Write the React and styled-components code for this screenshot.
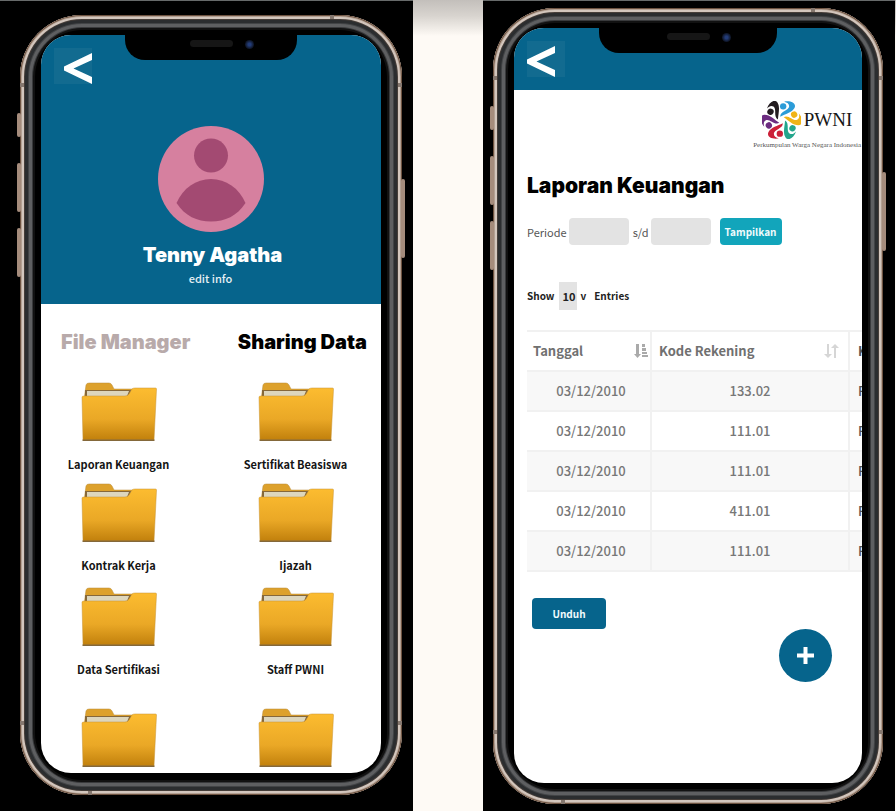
import React from "react";
import styled, { createGlobalStyle } from "styled-components";

const BLUE = "#06648c";
const HEADING = `"Inter", "Open Sans", sans-serif`;
const BODY = `"Noto Sans CJK SC", "Open Sans", sans-serif`;

const GlobalStyle = createGlobalStyle`
  * { box-sizing: border-box; }
  body { margin: 0; background: #fefaf5; }
  button, input, select { font: inherit; border: 0; margin: 0; padding: 0; }
  button { cursor: pointer; }
  h1, h2, p { margin: 0; }
`;

const Page = styled.main`
  display: grid;
  grid-template-columns: 413fr 412fr;
  column-gap: 70px;
  padding-right: 1px;
  min-height: 100vh;
  font-family: ${BODY};
  background: linear-gradient(#c3bfbb, #d8d4cf 16px, #fefaf5 36px);
`;

const Stage = styled.section`
  display: flex;
  flex-direction: column;
  min-width: 0;
  padding: ${(p) => p.$pad};
  background: #000;
  box-shadow: inset 0 1px #676a6a;
`;

const Phone = styled.div`
  position: relative;
  flex: 1;
  display: flex;
  flex-direction: column;
  padding: ${(p) => p.$pad};
  border-radius: 62px;
  background: #000;
  box-shadow:
    inset 0 0 0 1px #6d5240,
    inset 0 0 0 2px #b3a092,
    inset 0 0 0 4px #d3c6bd,
    inset 0 0 0 5px #463e39,
    inset 0 0 0 8px #2b2d2f,
    inset 0 0 0 9px #424446,
    inset 0 0 0 12px #5e5f61,
    inset 0 0 0 13px #393a3c,
    inset 0 0 0 15px #111;
`;

const SideKey = styled.span`
  position: absolute;
  top: ${(p) => p.$top}px;
  ${(p) => p.$side}: -3px;
  width: 4px;
  height: ${(p) => p.$height}px;
  border-radius: 2px;
  background: #a58c7c;
`;

const Antenna = styled.span`
  position: absolute;
  ${(p) => p.$edge}: 0;
  ${(p) => p.$from}: ${(p) => p.$at}px;
  width: 4px;
  height: 4px;
  background: #86786f;
`;

const Screen = styled.div`
  position: relative;
  flex: 1;
  display: flex;
  flex-direction: column;
  overflow: hidden;
  border-radius: 30px;
  background: #fff;
`;

const Notch = styled.div`
  position: absolute;
  top: 0;
  left: 50%;
  width: ${(p) => p.$width}px;
  margin-left: -${(p) => p.$width / 2}px;
  height: 25px;
  border-radius: 0 0 20px 20px;
  background: #000;
  display: flex;
  justify-content: center;
  gap: 12px;
  padding: 5px 0 0 22px;
`;

const Speaker = styled.span`
  width: 43px;
  height: 7px;
  border-radius: 4px;
  background: #161616;
`;

const Camera = styled.span`
  width: 9px;
  height: 9px;
  border-radius: 50%;
  background: radial-gradient(#233c78 20%, #111a30 60%, #080a10);
`;

const Header = styled.header`
  height: ${(p) => p.$height}px;
  padding: ${(p) => p.$pad};
  background: ${BLUE};
  color: #fff;
`;

const BackButton = styled.button`
  display: flex;
  align-items: flex-end;
  justify-content: ${(p) => p.$align};
  width: 38px;
  height: 36px;
  background: #126b90;
  color: #fff;
`;

const Profile = styled.div`
  display: flex;
  flex-direction: column;
  align-items: center;
  margin-top: 42px;
`;

const Name = styled.h1`
  margin-top: 9px;
  padding-left: 4px;
  font: 900 20px/28px ${HEADING};
`;

const EditLink = styled.a`
  margin-top: 1px;
  font-size: 11px;
  line-height: 16px;
  font-weight: 500;
  color: #e6f0f4;
  text-decoration: none;
`;

const Tabs = styled.nav`
  display: flex;
  justify-content: space-between;
  padding: 23px 14px 0 20px;
`;

const Tab = styled.button`
  font: 900 20px/30px ${HEADING};
  background: none;
  color: ${(p) => (p.$active ? "#000" : "#b8aaaa")};
`;

const Folders = styled.div`
  display: grid;
  grid-template-columns: 1fr 1fr;
  grid-template-rows: 101px 104px 121px 64px;
  column-gap: 22px;
  padding: 25px 8px 0 0;
`;

const FolderTile = styled.a`
  display: flex;
  flex-direction: column;
  align-items: center;
  gap: 12px;
  color: #151515;
  font-weight: 700;
  font-size: 11px;
  line-height: 20px;
  text-decoration: none;
`;

const Report = styled.div`
  display: flex;
  flex-direction: column;
  align-items: flex-start;
  flex: 1;
  padding: 11px 0 0 13px;
`;

const Brand = styled.div`
  align-self: flex-end;
  display: flex;
  flex-direction: column;
  align-items: center;
  padding-right: 1px;
  font-family: "Liberation Serif", serif;
  color: #161616;
`;

const BrandRow = styled.div`
  display: flex;
  align-items: center;
  gap: 3px;
  font-size: 19px;
  line-height: 38px;
`;

const BrandNote = styled.p`
  margin-top: 1px;
  font-size: 7px;
  line-height: 10px;
  color: #555;
`;

const Title = styled.h1`
  margin-top: 21px;
  font: 900 21px/30px ${HEADING};
  color: #000;
`;

const Filter = styled.form`
  display: flex;
  align-items: center;
  margin-top: 17px;
  font-size: 11px;
  line-height: 26px;
  color: #555;
`;

const DateField = styled.input`
  width: 60px;
  height: 27px;
  margin: 0 4px 0 2px;
  border-radius: 4px;
  background: #e3e3e3;
`;

const ActionButton = styled.button`
  width: ${(p) => p.$width}px;
  height: ${(p) => p.$height}px;
  margin: ${(p) => p.$margin};
  border-radius: 4px;
  background: ${(p) => p.$color};
  color: #f0fafc;
  font-size: 10px;
  font-weight: 700;
  line-height: 16px;
`;

const Entries = styled.div`
  display: flex;
  align-items: center;
  gap: 5px;
  margin-top: 37px;
  font-size: 10px;
  line-height: 28px;
  font-weight: 700;
  color: #222;
`;

const CountSelect = styled.select`
  appearance: none;
  width: 18px;
  height: 28px;
  padding-left: 3px;
  border-radius: 0;
  background: #e3e3e3;
  color: #222;
  font-size: 11px;
`;

const Caret = styled.span`
  margin: 0 3px 0 -2px;
`;

const TableClip = styled.div`
  align-self: stretch;
  margin-top: 20px;
  overflow: hidden;
`;

const Table = styled.table`
  table-layout: fixed;
  width: 422px;
  border-collapse: collapse;
  font-size: 13px;
  line-height: 20px;
  color: #777;

  th, td {
    border: 2px solid #f1f1f1;
    border-left: 0;
    height: 40px;
  }
  th {
    text-align: left;
    padding: 0 2px 0 6px;
    color: #707070;
  }
  td {
    text-align: center;
    font-weight: 500;
  }
  td:first-child { padding-left: 6px; }
  th:nth-child(2) { padding-right: 9px; padding-left: 7px; }
  th:last-child, td:last-child { text-align: left; padding-left: 8px; color: #555; }
  tbody tr:nth-child(odd) { background: #f8f8f8; }
`;

const HeadCell = styled.div`
  display: flex;
  align-items: center;
  justify-content: space-between;
`;

const AddButton = styled.button`
  align-self: flex-end;
  display: grid;
  place-items: center;
  width: 53px;
  height: 53px;
  margin-right: 30px;
  border-radius: 50%;
  background: ${BLUE};
  color: #fff;
`;

function BackIcon() {
  return (
    <svg width="28" height="31" viewBox="0 0 28 31" fill="currentColor" aria-hidden="true">
      <path d="M28 0V7L9.500 15.500L28 24V31L0 17.500V13.500Z" />
    </svg>
  );
}

function Avatar() {
  return (
    <svg width="106" height="106" viewBox="0 0 106 106" role="img" aria-label="Tenny Agatha">
      <circle cx="53" cy="53" r="53" fill="#d6809f" />
      <circle cx="53" cy="29.500" r="17" fill="#a34a72" />
      <path d="M18.500 77C25 62 38 53 53 53S81 62 87.500 77C79 90 67 95.500 53 95.500S27 90 18.500 77Z" fill="#a34a72" />
    </svg>
  );
}

function FolderIcon({ id }) {
  return (
    <svg width="76" height="60" viewBox="0 0 76 60" aria-hidden="true">
      <defs>
        <linearGradient id={id} x1="0" y1="0" x2="0" y2="1">
          <stop offset="0" stopColor="#fcbc30" />
          <stop offset="0.600" stopColor="#eaa826" />
          <stop offset="1" stopColor="#c1800c" />
        </linearGradient>
      </defs>
      <path d="M3 18L5 3Q5.500 1 8 1H28Q30 1 31 3L33 7H52V18Z" fill="#dda12c" stroke="#b98a35" strokeWidth="0.500" />
      <path d="M4 8H50V16H4Z" fill="#86683a" />
      <path d="M6 9H48L46 14H6Z" fill="#ddd6bd" />
      <path d="M1 15Q1 14 3 14H44Q47 14 48 12L51 7Q52 6 54 6H74.500Q75.500 6 75.500 7L73 58H2Z" fill={`url(#${id})`} stroke="#c69235" strokeWidth="0.500" />
      <path d="M1.500 57.500H73.500V59H1.500Z" fill="#84683a" />
    </svg>
  );
}

const EMBLEM_COLORS = ["#2c9cd8", "#f0b418", "#24a68c", "#cc2038", "#6c2c80", "#231c20"];

function Emblem() {
  return (
    <svg width="39" height="38" viewBox="-58 -57 116 114" aria-hidden="true">
      {EMBLEM_COLORS.map((color, i) => (
        <g key={color} fill={color} transform={`rotate(${i * 60})`}>
          <circle cx="5" cy="-41" r="9.500" />
          <path d="M8 -55C28 -59 46 -50 39 -36C31 -22 12 -18 -4 -10C-4 -27 22 -28 23 -41C23 -49 17 -53 8 -55Z" />
        </g>
      ))}
    </svg>
  );
}

function SortAscIcon() {
  return (
    <svg width="15" height="16" viewBox="0 0 15 16" fill="#aaa" aria-hidden="true">
      <path d="M3 1H6V11H8L4.500 15L1 11H3ZM9 1H12V4H9ZM9 5H13V8H9ZM9 9H14V11H9ZM9 12H15V14H9Z" />
    </svg>
  );
}

function SortIcon() {
  return (
    <svg width="15" height="16" viewBox="0 0 15 16" fill="#d6d6d6" aria-hidden="true">
      <path d="M3 1H5V11H8L4 15L0 11H3ZM10 15H12V5H15L11 1L7 5H10Z" />
    </svg>
  );
}

function Hardware({ keys, antennas }) {
  return (
    <>
      {keys.map(([side, top, height]) => (
        <SideKey key={side + top} $side={side} $top={top} $height={height} />
      ))}
      {antennas.map(([edge, from, at]) => (
        <Antenna key={edge + at} $edge={edge} $from={from} $at={at} />
      ))}
    </>
  );
}

function PhoneNotch({ width }) {
  return (
    <Notch $width={width}>
      <Speaker />
      <Camera />
    </Notch>
  );
}

const FOLDERS = [
  "Laporan Keuangan",
  "Sertifikat Beasiswa",
  "Kontrak Kerja",
  "Ijazah",
  "Data Sertifikasi",
  "Staff PWNI",
  "",
  "",
];

const ROWS = ["133.02", "111.01", "111.01", "411.01", "111.01"];

const KEYS = [
  ["left", 98, 24],
  ["left", 148, 49],
  ["left", 213, 49],
  ["right", 164, 79],
];

const ANTENNAS = [
  ["top", "right", 68],
  ["bottom", "left", 68],
  ["left", "top", 68],
  ["right", "top", 68],
  ["left", "bottom", 70],
  ["right", "bottom", 70],
];

function FilesPhone() {
  return (
    <Stage $pad="15px 11px 16px 20px">
      <Phone $pad="20px 21px 22px 21px">
        <Hardware keys={KEYS} antennas={ANTENNAS} />
        <Screen>
          <Header $height={269} $pad="13px 14px 0 13px">
            <BackButton type="button" aria-label="Back" $align="flex-end">
              <BackIcon />
            </BackButton>
            <Profile>
              <Avatar />
              <Name>Tenny Agatha</Name>
              <EditLink href="#edit">edit info</EditLink>
            </Profile>
          </Header>
          <PhoneNotch width={172} />
          <Tabs>
            <Tab type="button">File Manager</Tab>
            <Tab type="button" $active>Sharing Data</Tab>
          </Tabs>
          <Folders>
            {FOLDERS.map((label, i) => (
              <FolderTile key={i} href="#folder" aria-label={label || "Folder"}>
                <FolderIcon id={`folder-${i}`} />
                {label}
              </FolderTile>
            ))}
          </Folders>
        </Screen>
      </Phone>
    </Stage>
  );
}

function ReportPhone() {
  return (
    <Stage $pad="8px 12px 7px 10px">
      <Phone $pad="20px 21px 21px 21px">
        <Hardware keys={KEYS} antennas={ANTENNAS} />
        <Screen>
          <Header $height={62} $pad="13px 0 0 13px">
            <BackButton type="button" aria-label="Back" $align="flex-start">
              <BackIcon />
            </BackButton>
          </Header>
          <PhoneNotch width={178} />
          <Report>
            <Brand>
              <BrandRow>
                <Emblem />
                <span>PWNI</span>
              </BrandRow>
              <BrandNote>Perkumpulan Warga Negara Indonesia</BrandNote>
            </Brand>
            <Title>Laporan Keuangan</Title>
            <Filter>
              <label htmlFor="from">Periode</label>
              <DateField id="from" />
              <label htmlFor="to">s/d</label>
              <DateField id="to" />
              <ActionButton type="button" $width={62} $height={27} $margin="0 0 0 5px" $color="#12a5bb">
                Tampilkan
              </ActionButton>
            </Filter>
            <Entries>
              <label htmlFor="count">Show</label>
              <CountSelect id="count">
                <option>10</option>
              </CountSelect>
              <Caret>v</Caret>
              <span>Entries</span>
            </Entries>
            <TableClip>
              <Table>
                <colgroup>
                  <col width="124" />
                  <col width="198" />
                  <col width="100" />
                </colgroup>
                <thead>
                  <tr>
                    <th><HeadCell>Tanggal <SortAscIcon /></HeadCell></th>
                    <th><HeadCell>Kode Rekening <SortIcon /></HeadCell></th>
                    <th>K</th>
                  </tr>
                </thead>
                <tbody>
                  {ROWS.map((code, i) => (
                    <tr key={i}>
                      <td>03/12/2010</td>
                      <td>{code}</td>
                      <td>R</td>
                    </tr>
                  ))}
                </tbody>
              </Table>
            </TableClip>
            <ActionButton type="button" $width={74} $height={31} $margin="26px 0 0 5px" $color={BLUE}>
              Unduh
            </ActionButton>
            <AddButton type="button" aria-label="Add">
              <svg width="17" height="17" viewBox="0 0 17 17" stroke="currentColor" strokeWidth="4" aria-hidden="true">
                <path d="M8.500 0V17M0 8.500H17" />
              </svg>
            </AddButton>
          </Report>
        </Screen>
      </Phone>
    </Stage>
  );
}

export default function App() {
  return (
    <>
      <GlobalStyle />
      <Page>
        <FilesPhone />
        <ReportPhone />
      </Page>
    </>
  );
}
